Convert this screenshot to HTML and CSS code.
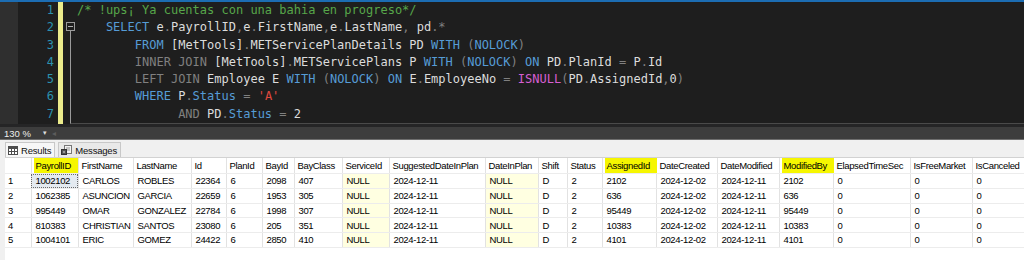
FILE: index.html
```html
<!DOCTYPE html>
<html lang="es">
<head>
    <meta charset="UTF-8">
    <title>SQLQuery - Results</title>
    <link rel="stylesheet" href="styles.css">
</head>
<body>
    <div class="editor">
        <div class="selection-margin"></div>
        <div class="line-numbers">
            <div>1</div>
            <div>2</div>
            <div>3</div>
            <div>4</div>
            <div>5</div>
            <div>6</div>
            <div>7</div>
        </div>
        <div class="change-bar"></div>
        <div class="outline">
            <span class="collapse-box"><span></span></span>
            <span class="outline-line"></span>
        </div>
        <div class="code">
            <div class="ln"><span class="cm">/* !ups¡ Ya cuentas con una bahia en progreso*/</span></div>
            <div class="ln indent-1"><span class="kw">SELECT</span> e<span class="op">.</span>PayrollID<span class="op">,</span>e<span class="op">.</span>FirstName<span class="op">,</span>e<span class="op">.</span>LastName<span class="op">,</span> pd<span class="op">.*</span></div>
            <div class="ln indent-2"><span class="kw">FROM</span> [MetTools]<span class="op">.</span>METServicePlanDetails PD <span class="kw">WITH</span> <span class="op">(</span><span class="kw">NOLOCK</span><span class="op">)</span></div>
            <div class="ln indent-2"><span class="op">INNER JOIN</span> [MetTools]<span class="op">.</span>METServicePlans P <span class="kw">WITH</span> <span class="op">(</span><span class="kw">NOLOCK</span><span class="op">)</span> <span class="kw">ON</span> PD<span class="op">.</span>PlanId <span class="op">=</span> P<span class="op">.</span>Id</div>
            <div class="ln indent-2"><span class="op">LEFT JOIN</span> Employee E <span class="kw">WITH</span> <span class="op">(</span><span class="kw">NOLOCK</span><span class="op">)</span> <span class="kw">ON</span> E<span class="op">.</span>EmployeeNo <span class="op">=</span> <span class="fn">ISNULL</span><span class="op">(</span>PD<span class="op">.</span>AssignedId<span class="op">,</span>0<span class="op">)</span></div>
            <div class="ln indent-2"><span class="kw">WHERE</span> P<span class="op">.</span><span class="kw">Status</span> <span class="op">=</span> <span class="str">'A'</span></div>
            <div class="ln indent-3"><span class="op">AND</span> PD<span class="op">.</span><span class="kw">Status</span> <span class="op">=</span> 2</div>
        </div>
    </div>
    <div class="hscroll"></div>
    <div class="status-bar">
        <span class="zoom-level">130 %</span>
        <span class="zoom-arrow">&#9662;</span>
        <span class="scroll-left">&#9666;</span>
    </div>

    <div class="results">
        <div class="tabs">
            <div class="tab active">
                <svg width="10" height="9" viewBox="0 0 10 9">
                    <rect x="0.5" y="0.5" width="9" height="8" fill="#fff" stroke="#4d4d4d"/>
                    <rect x="0" y="0" width="10" height="3" fill="#4d4d4d"/>
                    <path d="M3.5 3v6M6.5 3v6M0 5.5h10" stroke="#4d4d4d"/>
                </svg>
                Results
            </div>
            <div class="tab">
                <svg width="11" height="10" viewBox="0 0 11 10">
                    <rect x="3.5" y="0.5" width="7" height="8" fill="#f4f4f4" stroke="#777"/>
                    <path d="M5 3h4M5 5h4" stroke="#999"/>
                    <rect x="0.5" y="4.5" width="5" height="5" fill="#555" stroke="#333"/>
                    <path d="M2 7h2" stroke="#ddd"/>
                </svg>
                Messages
            </div>
        </div>

        <div class="grid-wrap">
            <table class="grid">
                <colgroup>
                    <col style="width:26px"><col style="width:47px"><col style="width:55px"><col style="width:58px">
                    <col style="width:35px"><col style="width:36px"><col style="width:32px"><col style="width:48px">
                    <col style="width:47px"><col style="width:96px"><col style="width:53px"><col style="width:29px">
                    <col style="width:35px"><col style="width:54px"><col style="width:61px"><col style="width:62px">
                    <col style="width:54px"><col style="width:77px"><col style="width:62px"><col style="width:60px">
                </colgroup>
                <thead>
                    <tr>
                        <th></th>
                        <th class="hl"><span class="mark">PayrollID</span></th>
                        <th>FirstName</th>
                        <th>LastName</th>
                        <th>Id</th>
                        <th>PlanId</th>
                        <th>BayId</th>
                        <th>BayClass</th>
                        <th>ServiceId</th>
                        <th>SuggestedDateInPlan</th>
                        <th>DateInPlan</th>
                        <th>Shift</th>
                        <th>Status</th>
                        <th class="hl"><span class="mark">AssignedId</span></th>
                        <th>DateCreated</th>
                        <th>DateModified</th>
                        <th class="hl"><span class="mark">ModifiedBy</span></th>
                        <th>ElapsedTimeSec</th>
                        <th>IsFreeMarket</th>
                        <th>IsCanceled</th>
                    </tr>
                </thead>
                <tbody>
                    <tr>
                        <td class="rownum">1</td><td class="current">1002102</td><td>CARLOS</td><td>ROBLES</td>
                        <td>22364</td><td>6</td><td>2098</td><td>407</td><td class="null">NULL</td>
                        <td>2024-12-11</td><td class="null">NULL</td><td>D</td><td>2</td><td>2102</td>
                        <td>2024-12-02</td><td>2024-12-11</td><td>2102</td><td>0</td><td>0</td><td>0</td>
                    </tr>
                    <tr>
                        <td class="rownum">2</td><td>1062385</td><td>ASUNCION</td><td>GARCIA</td>
                        <td>22659</td><td>6</td><td>1953</td><td>305</td><td class="null">NULL</td>
                        <td>2024-12-11</td><td class="null">NULL</td><td>D</td><td>2</td><td>636</td>
                        <td>2024-12-02</td><td>2024-12-11</td><td>636</td><td>0</td><td>0</td><td>0</td>
                    </tr>
                    <tr>
                        <td class="rownum">3</td><td>995449</td><td>OMAR</td><td>GONZALEZ</td>
                        <td>22784</td><td>6</td><td>1998</td><td>307</td><td class="null">NULL</td>
                        <td>2024-12-11</td><td class="null">NULL</td><td>D</td><td>2</td><td>95449</td>
                        <td>2024-12-02</td><td>2024-12-11</td><td>95449</td><td>0</td><td>0</td><td>0</td>
                    </tr>
                    <tr>
                        <td class="rownum">4</td><td>810383</td><td>CHRISTIAN</td><td>SANTOS</td>
                        <td>23080</td><td>6</td><td>205</td><td>351</td><td class="null">NULL</td>
                        <td>2024-12-11</td><td class="null">NULL</td><td>D</td><td>2</td><td>10383</td>
                        <td>2024-12-02</td><td>2024-12-11</td><td>10383</td><td>0</td><td>0</td><td>0</td>
                    </tr>
                    <tr>
                        <td class="rownum">5</td><td>1004101</td><td>ERIC</td><td>GOMEZ</td>
                        <td>24422</td><td>6</td><td>2850</td><td>410</td><td class="null">NULL</td>
                        <td>2024-12-11</td><td class="null">NULL</td><td>D</td><td>2</td><td>4101</td>
                        <td>2024-12-02</td><td>2024-12-11</td><td>4101</td><td>0</td><td>0</td><td>0</td>
                    </tr>
                </tbody>
            </table>
        </div>
    </div>
</body>
</html>
```

FILE: styles.css
```css
body {
    margin: 0;
    width: 1024px;
    height: 260px;
    overflow: hidden;
    background: #f0f0f0;
    font-family: "Liberation Sans", Arial, sans-serif;
}

/* query editor */
.editor {
    display: flex;
    height: 124px;
    box-sizing: border-box;
    border-top: 2px solid #1c6db3;
    background: #1e1e1e;
    font-family: "DejaVu Sans Mono", monospace;
    font-size: 12px;
    line-height: 17.25px;
}

.selection-margin {
    width: 18px;
    background: #2f2f2f;
}

.line-numbers {
    width: 36px;
    padding-right: 2px;
    text-align: right;
    color: #2b91af;
}

.change-bar {
    width: 5px;
    margin-left: 2px;
    background: #ecec8c;
}

.outline {
    width: 14px;
    display: flex;
    flex-direction: column;
}

.collapse-box {
    width: 9px;
    height: 9px;
    margin: 20px 0 0 3px;
    box-sizing: border-box;
    border: 1px solid #9a9a9a;
    display: flex;
    align-items: center;
    justify-content: center;
}

.collapse-box span {
    width: 5px;
    height: 1px;
    background: #b0b0b0;
}

.outline-line {
    flex: 1;
    margin-left: 7px;
    border-left: 1px solid #9a9a9a;
    border-bottom: 1px solid #4a4a4a;
}

.code {
    flex: 1;
    color: #dcdcdc;
    overflow: hidden;
    border-bottom: 1px solid #4a4a4a;
}

.ln {
    height: 17.25px;
    white-space: pre;
}

.indent-1 { padding-left: 4ch; }
.indent-2 { padding-left: 8ch; }
.indent-3 { padding-left: 14ch; }

.cm { color: #57a64a; }
.kw { color: #569cd6; }
.op { color: #808080; }
.fn { color: #d65fd2; }
.str { color: #e0493f; }

.hscroll {
    height: 3px;
    background: #252526;
}

.status-bar {
    height: 12px;
    display: flex;
    align-items: center;
    padding-left: 4px;
    background: #3d3d3d;
    border-bottom: 1px solid #6e6e6e;
    font-size: 9.5px;
    color: #eeeeee;
}

.zoom-arrow {
    margin-left: 12px;
    font-size: 7px;
    color: #dddddd;
}

.scroll-left {
    margin-left: 5px;
    font-size: 8px;
    color: #5c5c5c;
}

/* results pane */
.tabs {
    height: 17px;
    box-sizing: border-box;
    display: flex;
    gap: 3px;
    padding: 2px 0 0 5px;
}

.tab {
    height: 15px;
    box-sizing: border-box;
    display: flex;
    align-items: center;
    gap: 3px;
    padding: 0 3px 0 2px;
    border: 1px solid #c8c8c8;
    border-bottom: none;
    background: #e9e9e9;
    font-size: 9.5px;
    letter-spacing: -0.2px;
    color: #111;
}

.tab.active {
    background: #f7f7f7;
}

.grid-wrap {
    margin-left: 5px;
    height: 103px;
    overflow: hidden;
    background: #fff;
    border-top: 1px solid #d2d2d2;
}

.grid {
    width: 1025px;
    table-layout: fixed;
    border-collapse: collapse;
    font-size: 9.5px;
    letter-spacing: -0.35px;
    color: #000;
}

.grid th {
    height: 15px;
    padding: 0 0 0 3px;
    font-weight: normal;
    text-align: left;
    white-space: nowrap;
    overflow: hidden;
    border-right: 1px solid #e2e2e2;
    border-bottom: 1px solid #ececec;
}

.grid th.hl {
    padding-left: 2px;
    overflow: visible;
}

.mark {
    display: inline-block;
    line-height: 15px;
    padding: 0 7px 0 2px;
    background: #f6f600;
}

.grid td {
    height: 13.75px;
    padding: 0 0 0 4px;
    white-space: nowrap;
    overflow: hidden;
    border-right: 1px solid #e2e2e2;
    border-bottom: 1px solid #ececec;
}

.grid td.rownum {
    padding-left: 3px;
}

.grid td.null {
    background: #ffffe1;
}

.grid td.current {
    background: #e4eaf0;
    outline: 1px dotted #6a6a6a;
    outline-offset: -1px;
}
```
